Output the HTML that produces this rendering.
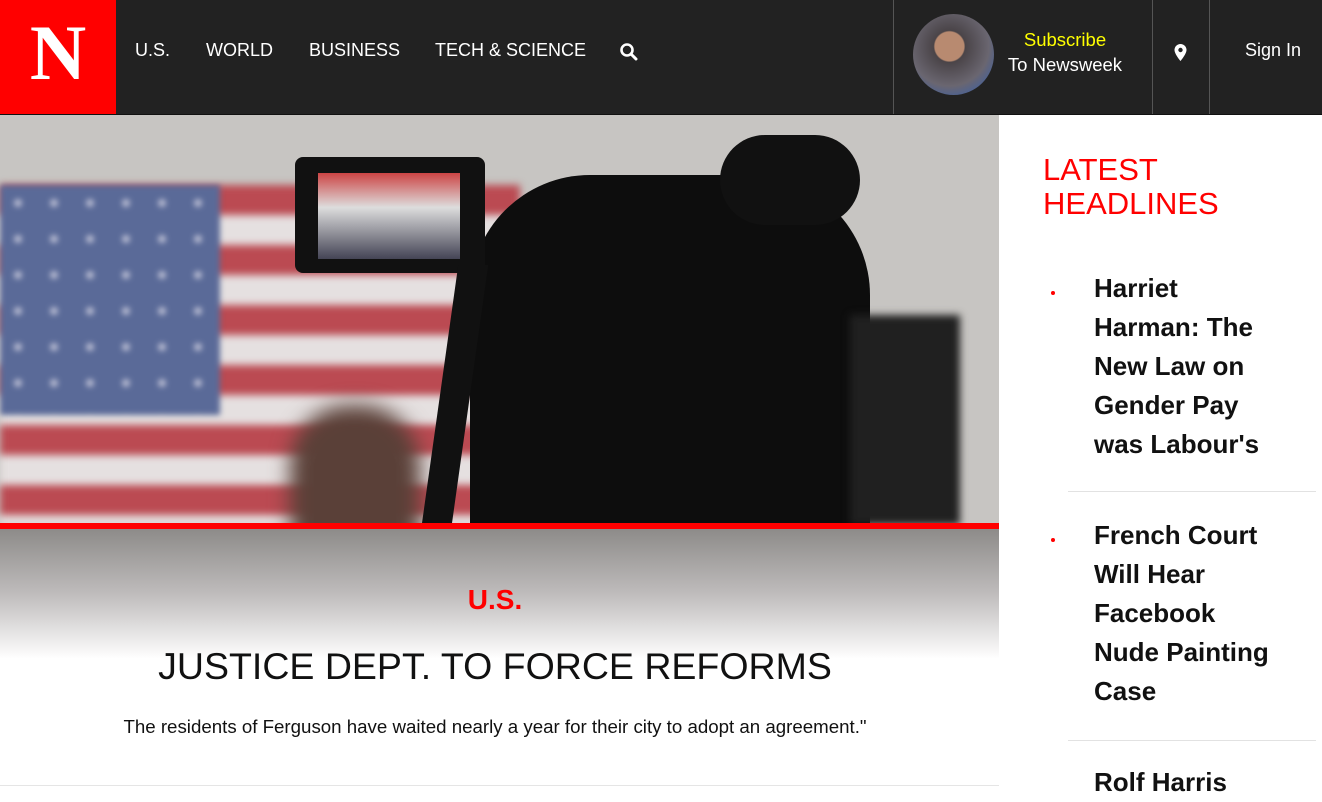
<!DOCTYPE html>
<html><head><meta charset="utf-8"><style>
*{margin:0;padding:0;box-sizing:border-box}
body{width:1322px;height:786px;overflow:hidden;background:#fff;font-family:"Liberation Sans",Arial,sans-serif;position:relative}
.nav{position:absolute;left:0;top:0;width:1322px;height:115px;background:#222;border-bottom:1px solid #111}
.logo{position:absolute;left:0;top:0;width:116px;height:114px;background:#f00;color:#fff;font-family:"Liberation Serif",serif;font-weight:bold;font-size:78px;text-align:center;line-height:106px;transform:none}
.nav a{position:absolute;top:40px;color:#fff;font-size:18px;text-decoration:none}
.vl{position:absolute;top:0;width:1px;height:114px;background:#555}
.hero{position:absolute;left:0;top:115px;width:999px;height:671px;overflow:hidden}
.img{position:absolute;left:0;top:0;width:999px;height:410px;background:#c7c5c2}
.side{position:absolute;left:999px;top:115px;width:323px;height:671px;background:#fff}
.side h2{position:absolute;left:44px;top:38px;color:#f00;font-weight:normal;font-size:31px;line-height:34px}
.item{position:absolute;left:95px;font-weight:bold;font-size:26px;line-height:39px;color:#111;width:190px}
.dot{position:absolute;left:52px;width:4px;height:4px;border-radius:2px;background:#f00}
.hr{position:absolute;left:69px;width:248px;height:1px;background:#e2e2e2}
</style></head><body>
<div class="hero">
 <div class="img">
  <div style="position:absolute;left:0;top:70px;width:520px;height:340px;background:repeating-linear-gradient(#bb4a52 0 30px,#e5e0e0 30px 60px);filter:blur(4px)"></div>
  <div style="position:absolute;left:0;top:70px;width:220px;height:230px;background:radial-gradient(circle,#cfd0e0 2px,#5a6a98 5px);background-size:36px 36px;filter:blur(3px)"></div>
  <div style="position:absolute;left:290px;top:290px;width:130px;height:150px;background:#5a4038;border-radius:60px 60px 0 0;filter:blur(10px)"></div>
  <div style="position:absolute;left:470px;top:60px;width:400px;height:350px;background:#0d0d0d;border-radius:120px 120px 0 0"></div>
  <div style="position:absolute;left:720px;top:20px;width:140px;height:90px;background:#111;border-radius:50px"></div>
  <div style="position:absolute;left:850px;top:200px;width:110px;height:210px;background:#202020;filter:blur(4px)"></div>
  <div style="position:absolute;left:295px;top:42px;width:190px;height:116px;background:#111;border-radius:8px"></div>
  <div style="position:absolute;left:318px;top:58px;width:142px;height:86px;background:linear-gradient(#c44 0,#ddd 40%,#445 100%)"></div>
  <div style="position:absolute;left:440px;top:150px;width:30px;height:260px;background:#111;transform:skewX(-8deg)"></div>
 </div>
 <div style="position:absolute;left:0;top:408px;width:999px;height:6px;background:#f00"></div>
 <div style="position:absolute;left:0;top:414px;width:999px;height:130px;background:linear-gradient(#8d8b89 0%,#bfbcbc 50%,#fff 100%)"></div>
 <div style="position:absolute;left:0;top:469px;width:990px;text-align:center;color:#f00;font-weight:bold;font-size:28px">U.S.</div>
 <div style="position:absolute;left:0;top:530px;width:990px;text-align:center;color:#111;font-size:37.5px">JUSTICE DEPT. TO FORCE REFORMS</div>
 <div style="position:absolute;left:0;top:601px;width:990px;text-align:center;color:#111;font-size:18.7px">The residents of Ferguson have waited nearly a year for their city to adopt an agreement."</div>
 <div style="position:absolute;left:0;top:670px;width:999px;height:1px;background:#e5e5e5"></div>
</div>
<div class="side">
 <h2>LATEST<br>HEADLINES</h2>
 <div class="dot" style="top:176px"></div>
 <div class="item" style="top:154px">Harriet<br>Harman: The<br>New Law on<br>Gender Pay<br>was Labour's</div>
 <div class="hr" style="top:376px"></div>
 <div class="dot" style="top:423px"></div>
 <div class="item" style="top:401px">French Court<br>Will Hear<br>Facebook<br>Nude Painting<br>Case</div>
 <div class="hr" style="top:625px"></div>
 <div class="item" style="top:648px">Rolf Harris</div>
</div>
<div class="nav">
 <div class="logo">N</div>
 <a style="left:135px">U.S.</a><a style="left:206px">WORLD</a><a style="left:309px">BUSINESS</a><a style="left:435px">TECH &amp; SCIENCE</a>
 <svg style="position:absolute;left:619px;top:42px" width="19" height="19" viewBox="0 0 19 19"><circle cx="8" cy="8" r="5.5" fill="none" stroke="#fff" stroke-width="2.6"/><path d="M12 12l5 5" stroke="#fff" stroke-width="3" stroke-linecap="round"/></svg>
 <div class="vl" style="left:893px"></div>
 <div style="position:absolute;left:913px;top:14px;width:81px;height:81px;border-radius:50%;background:radial-gradient(circle at 45% 40%,#b88a70 0 22%,#4a4448 24%,#6a6670 60%,#4060a0 85%)"></div>
 <div style="position:absolute;left:1004px;top:27px;width:122px;text-align:center;font-size:18.5px;line-height:25px"><span style="color:#ff0">Subscribe</span><br><span style="color:#fff">To Newsweek</span></div>
 <div class="vl" style="left:1152px"></div>
 <svg style="position:absolute;left:1173px;top:43px" width="15" height="19" viewBox="0 0 15 19"><path d="M7.5 1a6 6 0 0 0-6 6c0 4 6 11 6 11s6-7 6-11a6 6 0 0 0-6-6z" fill="#fff"/><circle cx="7.5" cy="7" r="2.2" fill="#222"/></svg>
 <div class="vl" style="left:1209px"></div>
 <a style="left:1245px">Sign In</a>
</div>
</body></html>
